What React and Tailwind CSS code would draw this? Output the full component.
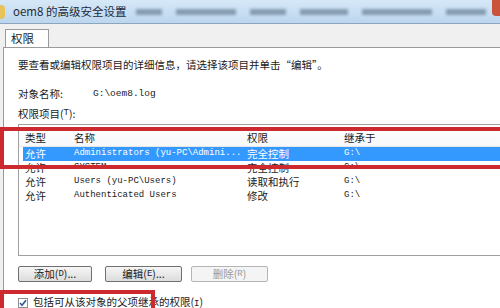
import React from 'react';

const cjk = "font-['Noto_Sans_CJK_SC',sans-serif]";
const mono = "font-['Liberation_Mono','Noto_Sans_CJK_SC',monospace]";

const rows = [
	{ type: '允许', name: 'Administrators (yu-PC\\Admini...', perm: '完全控制', from: 'G:\\', selected: true },
	{ type: '允许', name: 'SYSTEM', perm: '完全控制', from: 'G:\\' },
	{ type: '允许', name: 'Users (yu-PC\\Users)', perm: '读取和执行', from: 'G:\\' },
	{ type: '允许', name: 'Authenticated Users', perm: '修改', from: 'G:\\' },
];

export default function App() {
	return (
		<div className={`relative w-[500px] h-[308px] overflow-hidden bg-[#f0f0f0] ${cjk} text-[#1a1a1a]`}>
			{/* title bar */}
			<div className="relative h-[24px] flex items-center bg-gradient-to-b from-[#d6e8f7] to-[#bcd6ee] border-b border-[#8da6c0]">
				<div className="w-[5px] h-[14px] bg-[#e8c25a] rounded-r-sm" />
				<span className="ml-[8px] text-[11.5px] text-[#1e2b3a] leading-none">oem8 的高级安全设置</span>
				<div className="ml-[10px] flex items-center gap-[14px] blur-[1.5px] opacity-60">
					<span className="w-[26px] h-[6px] bg-[#5a6f86]" />
					<span className="w-[60px] h-[6px] bg-[#5a6f86]" />
					<span className="w-[36px] h-[6px] bg-[#5a6f86]" />
					<span className="w-[48px] h-[6px] bg-[#5a6f86]" />
					<span className="w-[70px] h-[6px] bg-[#5a6f86]" />
					<span className="w-[40px] h-[6px] bg-[#5a6f86]" />
				</div>
				<div className="absolute right-0 top-0 w-[8px] h-[16px] bg-[#c9533b] rounded-bl-sm" />
			</div>

			{/* tabs */}
			<div className="h-[23px] flex items-end pl-[5px]">
				<div className="w-[44px] h-[18px] bg-white border border-b-0 border-[#9a9a9a] flex items-center pl-[5px] text-[11.5px] leading-none">权限</div>
			</div>

			{/* panel */}
			<div className="ml-[3px] bg-white border-t border-l border-[#9a9a9a] h-[270px] pl-[14px]">
				<p className="mt-[10px] text-[10.5px] leading-[14px]">要查看或编辑权限项目的详细信息，请选择该项目并单击“编辑”。</p>
				<div className="mt-[15px] flex items-center h-[14px] text-[10.5px]">
					<span className="w-[75px]">对象名称:</span>
					<span className={`${mono} text-[9.5px]`}>G:\oem8.log</span>
				</div>
				<div className="mt-[6px] h-[14px] flex items-center text-[10.5px]">权限项目(<span className={`${mono} text-[9px]`}>T</span>):</div>

				{/* list */}
				<div className="mt-[3px] h-[132px] border border-r-0 border-[#a0a0a0] bg-white">
					<div className="h-[22px] flex items-end pb-0 text-[10.5px] border-b border-[#e6e6e6] bg-gradient-to-b from-white to-[#f7f8fa]">
						<span className="w-[55px] pl-[6px]">类型</span>
						<span className="w-[173px]">名称</span>
						<span className="w-[97px]">权限</span>
						<span>继承于</span>
					</div>
					{rows.map((r) => (
						<div key={r.name} className={`h-[14px] flex items-center ml-[4px] text-[10.5px] ${r.selected ? 'bg-[#3399ff] text-white' : ''}`}>
							<span className="w-[51px] pl-[2px]">{r.type}</span>
							<span className={`w-[173px] ${mono} text-[9px]`}>{r.name}</span>
							<span className="w-[97px]">{r.perm}</span>
							<span className={`${mono} text-[9px]`}>{r.from}</span>
						</div>
					))}
				</div>

				{/* buttons */}
				<div className="mt-[10px] flex gap-[13px] text-[10.5px]">
					<button className="w-[74px] h-[16px] rounded-[2px] border border-[#707070] bg-gradient-to-b from-[#f6f6f6] to-[#dcdcdc] flex items-center justify-center leading-none">添加(<span className={`${mono} text-[9px]`}>D</span>)...</button>
					<button className="w-[77px] h-[16px] rounded-[2px] border border-[#707070] bg-gradient-to-b from-[#f6f6f6] to-[#dcdcdc] flex items-center justify-center leading-none">编辑(<span className={`${mono} text-[9px]`}>E</span>)...</button>
					<button className="-ml-[4px] w-[77px] h-[16px] rounded-[2px] border border-[#b5b5b5] bg-[#f4f4f4] text-[#9a9a9a] flex items-center justify-center leading-none">删除(<span className={`${mono} text-[9px]`}>R</span>)</button>
				</div>

				{/* checkbox */}
				<div className="mt-[13px] flex items-center gap-[5px] text-[10.5px] leading-[14px]">
					<span className="w-[10px] h-[10px] border border-[#8e8f8f] bg-white flex items-center justify-center">
						<svg width="8" height="8" viewBox="0 0 8 8"><path d="M1 4 L3 6.3 L7 1.2" fill="none" stroke="#2a5a9c" strokeWidth="1.6" /></svg>
					</span>
					<span>包括可从该对象的父项继承的权限(<span className={`${mono} text-[9px]`}>I</span>)</span>
				</div>
			</div>

			{/* red annotation boxes */}
			<div className="absolute left-0 top-[127px] w-[520px] h-[42px] border-[4px] border-[#cc2a2e]" />
			<div className="absolute left-0 top-[290px] w-[155px] h-[40px] border-[4px] border-[#cc2a2e]" />
		</div>
	);
}
